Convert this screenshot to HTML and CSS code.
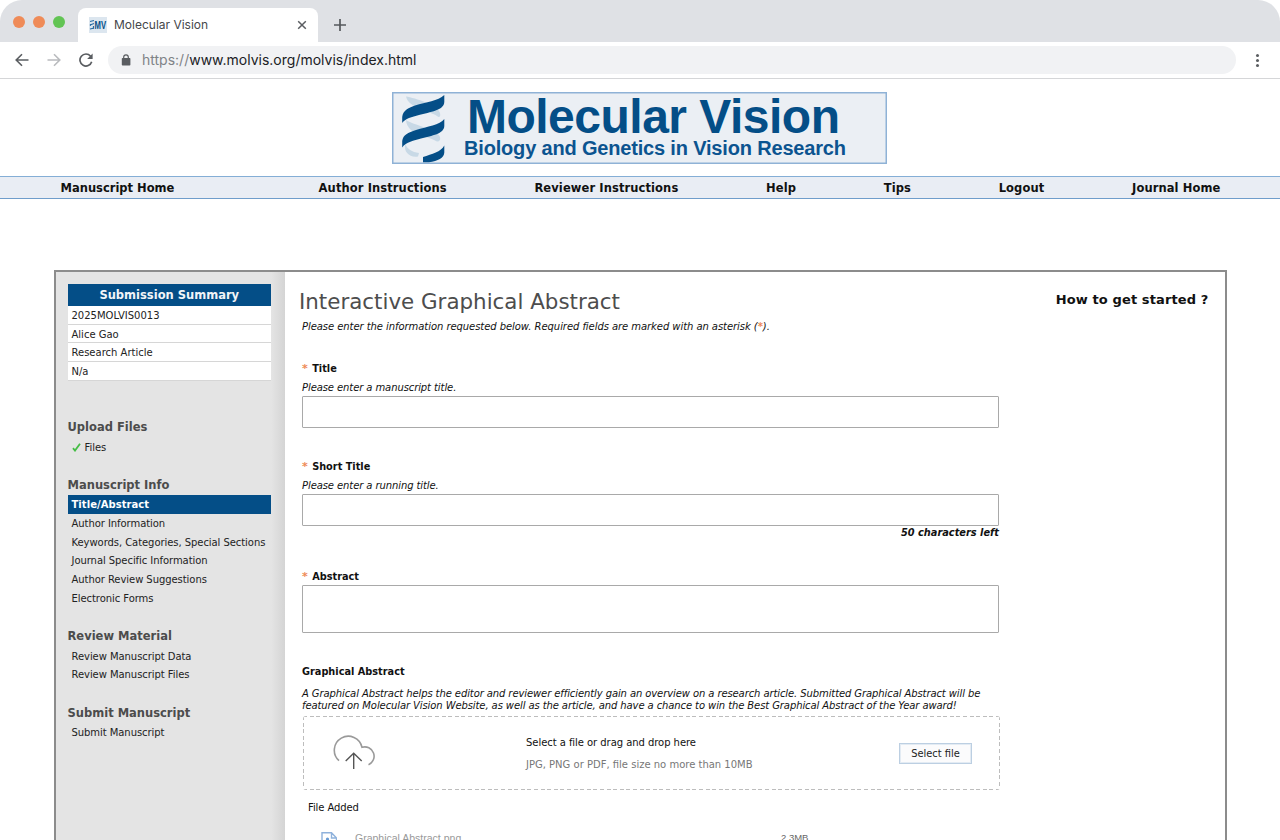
FILE: index.html
```html
<!DOCTYPE html>
<html lang="en">
<head>
  <meta charset="UTF-8" />
  <title>Molecular Vision</title>
  <link rel="stylesheet" href="styles.css">
</head>
<body>
<div class="browser">
  <div class="tab-bar">
    <div class="lights"><i></i><i></i><i class="green"></i></div>
    <div class="tab">
      <svg class="favicon" width="18" height="16" viewBox="0 0 18 16">
        <rect width="18" height="16" fill="#dce6ef"/>
        <path d="M1 4.500L5 3.500M1 8L5 6.500M1 12L5 11M1.500 7v2M4.500 9v3" stroke="#2a6da5" stroke-width="1.200"/>
        <text x="5.500" y="12" textLength="11.500" lengthAdjust="spacingAndGlyphs" class="favicon-text">MV</text>
      </svg>
      <span class="tab-title">Molecular Vision</span>
      <svg class="tab-close" width="10" height="10" viewBox="0 0 10 10"><path d="M1.200 1.200L8.800 8.800M8.800 1.200L1.200 8.800" stroke="#5a5d61" stroke-width="1.500"/></svg>
    </div>
    <svg class="new-tab" width="12" height="12" viewBox="0 0 12 12"><path d="M6 0V12M0 6H12" stroke="#55585c" stroke-width="1.700"/></svg>
  </div>
  <div class="toolbar">
    <svg width="14" height="14" viewBox="0 0 14 14"><path d="M13.500 7H1.500M7 1.200L1.200 7L7 12.800" fill="none" stroke="#5a5d61" stroke-width="1.600"/></svg>
    <svg width="14" height="14" viewBox="0 0 14 14"><path d="M0.500 7H12.500M7 1.200L12.800 7L7 12.800" fill="none" stroke="#b9bbbe" stroke-width="1.600"/></svg>
    <svg width="14" height="14" viewBox="0 0 14 14"><path d="M11.600 3.200A6 6 0 1 0 12.700 8.800" fill="none" stroke="#5a5d61" stroke-width="1.700"/><path d="M13.600 0.500V6H8.100z" fill="#5a5d61"/></svg>
    <div class="address">
      <svg width="10" height="12" viewBox="0 0 10 12"><rect x="0.800" y="4" width="8.600" height="7.600" rx="0.800" fill="#5a5d61"/><path d="M2.700 4.500V3.100A2.300 2.300 0 0 1 7.300 3.100V4.500" fill="none" stroke="#5a5d61" stroke-width="1.200"/></svg>
      <span class="url"><em>https://</em>www.molvis.org/molvis/index.html</span>
    </div>
    <div class="menu"><i></i><i></i><i></i></div>
  </div>

  <div class="banner">
    <svg class="logo" width="495" height="72" viewBox="0 0 495 72">
      <rect x="0.750" y="0.750" width="493.500" height="70.500" fill="#ebeff4" stroke="#8fb2d6" stroke-width="1.500"/>
      <g fill="#c8d9e6">
        <path d="M14 4.500C23 6 46 13 48 21C49 25 47 26 45 24C38 19 17 17 14 4.500z"/>
        <path d="M14 28C21 33 45 37 48 45C49 49 46 51 43 48.500C36 44 15 43 14 28z"/>
        <path d="M13.500 52C15 57 20 60 27 61L26 64.500C18 66 11 60 13.500 52z"/>
      </g>
      <g fill="#044e87">
        <path d="M52.300 3C46 9 34 10 23 13.500C16 16 11 18.500 10.200 25V31C13 26.500 20 25 27 23C38 20 52 18.500 52.300 10z"/>
        <path d="M52.300 27C48 33 35 34.500 24 38C16 40.500 11 43 10.200 49V55.500C14 50 22 48.500 29 46.500C40 43.500 52 42 52.300 34z"/>
        <path d="M52.300 53.500C49 60 40 62 31 65V70.300H37C46 69 52 66 52.300 60.500z"/>
      </g>
      <text class="logo-name" x="75" y="41" textLength="373">Molecular Vision</text>
      <text class="logo-sub" x="72" y="63" textLength="382">Biology and Genetics in Vision Research</text>
    </svg>
  </div>
  <nav class="main-nav">
    <a>Manuscript Home</a>
    <a>Author Instructions</a>
    <a>Reviewer Instructions</a>
    <a>Help</a>
    <a>Tips</a>
    <a>Logout</a>
    <a>Journal Home</a>
  </nav>

  <div class="panel">
    <aside class="sidebar">
      <div class="summary">
        <h4>Submission Summary</h4>
        <p>2025MOLVIS0013</p>
        <p>Alice Gao</p>
        <p>Research Article</p>
        <p>N/a</p>
      </div>
      <div class="steps">
        <h3>Upload Files</h3>
        <ul>
          <li><svg width="9" height="9" viewBox="0 0 9 9"><path d="M1 5.200L3 7.600L8 0.800" fill="none" stroke="#45bd45" stroke-width="1.800"/></svg>Files</li>
        </ul>
        <h3>Manuscript Info</h3>
        <ul>
          <li class="active">Title/Abstract</li>
          <li>Author Information</li>
          <li>Keywords, Categories, Special Sections</li>
          <li>Journal Specific Information</li>
          <li>Author Review Suggestions</li>
          <li>Electronic Forms</li>
        </ul>
        <h3>Review Material</h3>
        <ul>
          <li>Review Manuscript Data</li>
          <li>Review Manuscript Files</li>
        </ul>
        <h3>Submit Manuscript</h3>
        <ul>
          <li>Submit Manuscript</li>
        </ul>
      </div>
    </aside>

    <main class="content">
      <div class="title-row">
        <h1>Interactive Graphical Abstract</h1>
        <a class="help">How to get started ?</a>
      </div>
      <p class="hint intro">Please enter the information requested below. Required fields are marked with an asterisk (<b class="req">*</b>).</p>

      <div class="form">
        <div class="field">
          <label><b class="req">*</b> Title</label>
          <p class="hint">Please enter a manuscript title.</p>
          <div class="input"></div>
        </div>
        <div class="field short">
          <label><b class="req">*</b> Short Title</label>
          <p class="hint">Please enter a running title.</p>
          <div class="input"></div>
          <p class="count">50 characters left</p>
        </div>
        <div class="field abstract">
          <label><b class="req">*</b> Abstract</label>
          <div class="input tall"></div>
        </div>
        <div class="field graphical">
          <label>Graphical Abstract</label>
          <p class="desc">A Graphical Abstract helps the editor and reviewer efficiently gain an overview on a research article. Submitted Graphical Abstract will be<br>featured on Molecular Vision Website, as well as the article, and have a chance to win the Best Graphical Abstract of the Year award!</p>
          <div class="drop">
            <svg class="cloud" width="42" height="36" viewBox="0 0 42 36">
              <path d="M6 25.700A14 14 0 1 1 29 12.300A9.300 9.300 0 0 1 35.500 29.700" fill="none" stroke="#9a9a9a" stroke-width="1.600"/>
              <path d="M20.700 34V18M12.700 26L20.700 18.200L28.700 26" fill="none" stroke="#555" stroke-width="1.400"/>
            </svg>
            <div class="drop-text">
              <p>Select a file or drag and drop here</p>
              <p class="limits">JPG, PNG or PDF, file size no more than 10MB</p>
            </div>
            <button>Select file</button>
          </div>
          <p class="added">File Added</p>
          <div class="file">
            <svg width="16" height="20" viewBox="0 0 16 20"><path d="M1 20V0.800H10.500L15.500 6V20M10.500 1V6H15.500" fill="none" stroke="#8fb2dc" stroke-width="1.400"/><circle cx="6.500" cy="7" r="1.600" fill="#6a9cd4"/></svg>
            <span class="file-name">Graphical Abstract.png</span>
            <span class="file-size">2.3MB</span>
          </div>
        </div>
      </div>
    </main>
  </div>
</div>
</body>
</html>
```
FILE: styles.css
```css
* {
  box-sizing: border-box;
}

body {
  margin: 0;
  background: #fff;
  font-family: "DejaVu Sans", Verdana, sans-serif;
  font-size: 10px;
  color: #222;
}

h1, h3, h4, p, ul {
  margin: 0;
  padding: 0;
}

svg {
  display: block;
  flex: none;
}

.browser {
  height: 840px;
  overflow: hidden;
  border-radius: 22px;
  background: #fff;
}

/* browser chrome */
.tab-bar {
  height: 42px;
  background: #dfe1e5;
  display: flex;
  align-items: flex-end;
}

.lights {
  display: flex;
  gap: 8px;
  padding: 0 13px;
  height: 40px;
  align-items: center;
}

.lights i {
  width: 12px;
  height: 12px;
  border-radius: 50%;
  background: #ef8b58;
}

.lights .green {
  background: #62c454;
}

.tab {
  width: 240px;
  height: 34px;
  background: #fff;
  border-radius: 8px 8px 0 0;
  display: flex;
  align-items: center;
  padding: 0 11px;
}

.tab-title {
  font: 12px Inter, sans-serif;
  color: #45474a;
  margin-left: 7px;
  padding-bottom: 1px;
}

.favicon-text {
  font: bold 11.5px "Liberation Sans", sans-serif;
  fill: #044e87;
}

.tab-close {
  margin-left: auto;
}

.new-tab {
  margin: 0 0 11px 16px;
}

.toolbar {
  height: 37px;
  border-bottom: 1px solid #d5d6d8;
  display: flex;
  align-items: center;
  padding-left: 15px;
  gap: 18px;
}

.address {
  width: 1128px;
  height: 28px;
  border-radius: 14px;
  margin-left: -3px;
  background: #f1f2f4;
  display: flex;
  align-items: center;
  padding-left: 13px;
  gap: 11px;
}

.url {
  font: 14px Inter, sans-serif;
  color: #202124;
  padding-bottom: 1px;
}

.url em {
  font-style: normal;
  color: #808387;
}

.menu {
  display: flex;
  flex-direction: column;
  gap: 2px;
  margin-left: 2px;
}

.menu i {
  width: 3px;
  height: 3px;
  border-radius: 50%;
  background: #5a5d61;
}

/* journal header */
.banner {
  height: 97px;
  padding: 13px 0 0 392px;
}

.logo-name {
  font: bold 48px "Liberation Sans", Arial, sans-serif;
  fill: #044e87;
}

.logo-sub {
  font: bold 20px "Liberation Sans", Arial, sans-serif;
  fill: #0b5490;
}

.main-nav {
  height: 23px;
  border-top: 1px solid #84aed6;
  border-bottom: 1px solid #6f9dcb;
  background: #e9edf4;
  display: flex;
  align-items: center;
  gap: 87.7px;
  padding-left: 60.5px;
  font-size: 11.5px;
  font-weight: bold;
  letter-spacing: 0.1px;
  color: #111;
  white-space: nowrap;
}

.main-nav a:first-child {
  margin-right: 56.5px;
  letter-spacing: 0;
}

/* submission panel */
.panel {
  margin: 71px 53.5px 0;
  height: 620px;
  border: 2px solid #8c8c8c;
  display: flex;
}

.sidebar {
  width: 229px;
  background: linear-gradient(to right, #e4e4e4 94%, #d4d4d4);
  padding: 12px 13.5px 0 12px;
  flex: none;
}

.summary h4 {
  height: 22px;
  line-height: 23px;
  background: #044e87;
  color: #f2f5f8;
  text-align: center;
  font-size: 11.5px;
}

.summary p {
  height: 18.67px;
  line-height: 20px;
  padding-left: 4px;
  background: #fff;
  border-bottom: 1px solid #d6d6d6;
}

.steps {
  padding-top: 18px;
}

.steps h3 {
  margin-top: 18.3px;
  height: 20px;
  line-height: 20px;
  font-size: 11.5px;
  color: #4c4c4c;
}

.steps ul {
  list-style: none;
  padding-bottom: 1px;
}

.steps li {
  height: 18.67px;
  padding: 1.5px 0 0 4px;
  display: flex;
  align-items: center;
  letter-spacing: -0.06px;
}

.steps li svg {
  margin-right: 4px;
}

.steps .active {
  background: #044e87;
  color: #fff;
  font-weight: bold;
  letter-spacing: 0.05px;
}

.content {
  padding: 15px 16px 0 14.5px;
  flex: 1;
  color: #111;
}

.title-row {
  display: flex;
  justify-content: space-between;
  height: 33px;
}

.title-row h1 {
  font-size: 21.4px;
  line-height: 30px;
  font-weight: normal;
  color: #4d4d4d;
}

.help {
  font-size: 13px;
  line-height: 26px;
  font-weight: bold;
  letter-spacing: 0.12px;
}

.hint,
.desc {
  font-style: italic;
}

.hint {
  line-height: 14px;
  letter-spacing: -0.09px;
}

.intro {
  padding-left: 3px;
  letter-spacing: -0.06px;
}

.form {
  width: 700px;
  padding: 28px 0 0 3px;
}

.field label {
  display: block;
  height: 19px;
  line-height: 14px;
  font-size: 9.75px;
  font-weight: bold;
}

.req {
  color: #ee8a57;
}

.field .req {
  font-size: 11px;
  margin-right: 1px;
}

.input {
  width: 697px;
  height: 32px;
  border: 1px solid #a9a9a9;
  border-radius: 1px;
  margin-top: 1px;
}

.short {
  margin-top: 32px;
}

.count {
  width: 697px;
  line-height: 14px;
  font-size: 9.8px;
  font-weight: bold;
  font-style: italic;
  text-align: right;
}

.abstract {
  margin-top: 30px;
}

.abstract label {
  height: 14px;
}

.tall {
  height: 48px;
}

.graphical {
  margin-top: 32px;
}

.graphical label {
  height: 23px;
}

.desc {
  line-height: 12px;
  letter-spacing: -0.096px;
  white-space: nowrap;
}

.drop {
  --dash: #bdbdbd 0 4px, transparent 4px 6.6px;
  width: 697px;
  height: 74px;
  margin: 4px 0 0 1px;
  background:
    repeating-linear-gradient(to right, var(--dash)) top / 100% 1px no-repeat,
    repeating-linear-gradient(to right, var(--dash)) bottom / 100% 1px no-repeat,
    repeating-linear-gradient(to bottom, var(--dash)) left / 1px 100% no-repeat,
    repeating-linear-gradient(to bottom, var(--dash)) right / 1px 100% no-repeat;
  border-radius: 3px;
  display: flex;
  align-items: center;
  padding: 0 28px 0 30px;
}

.drop-text {
  margin-left: 151px;
  padding-top: 1px;
}

.drop-text p {
  line-height: 14px;
  letter-spacing: -0.05px;
}

.drop-text .limits {
  margin-top: 8px;
  color: #777;
  letter-spacing: 0;
}

.drop button {
  width: 73px;
  height: 21px;
  margin-left: auto;
  padding: 0;
  border: 1px solid #bccfe2;
  box-shadow: inset 0 0 0 1px #e3ebf3;
  background: #fbfbfc;
  font: 9.9px "DejaVu Sans", Verdana, sans-serif;
  color: #222;
}

.added {
  padding: 10px 0 0 6px;
  line-height: 15px;
  letter-spacing: -0.1px;
}

.file {
  display: flex;
  margin-top: 17px;
  padding-left: 19px;
}

.file-name,
.file-size {
  font: 10.5px/12px "Liberation Sans", Arial, sans-serif;
  color: #999;
}

.file-name {
  width: 426px;
  margin-left: 18px;
}

.file-size {
  font-size: 9.5px;
  color: #666;
}
```
